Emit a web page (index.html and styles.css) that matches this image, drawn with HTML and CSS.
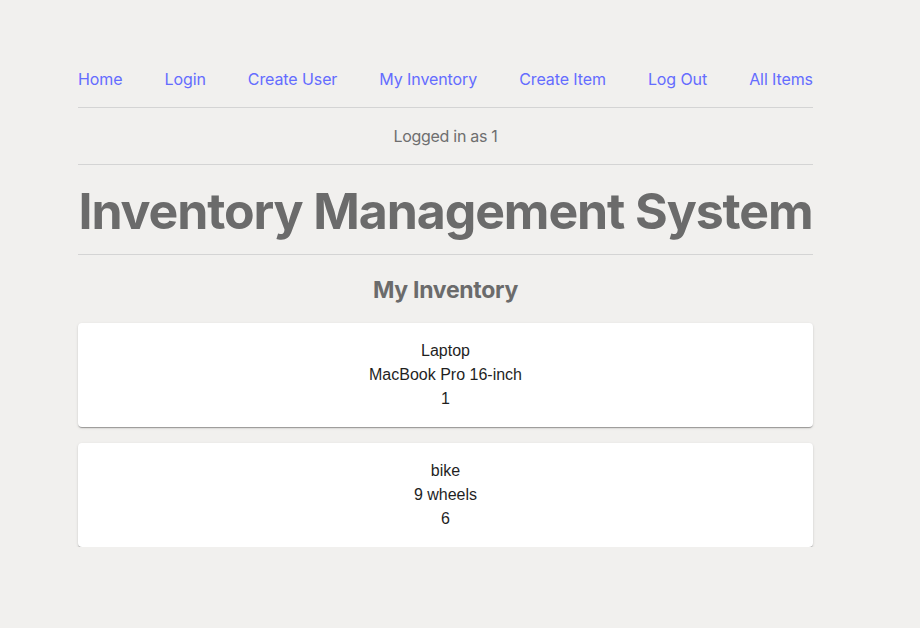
FILE: index.html
```html
<!DOCTYPE html>
<html>
<head>
<meta charset="utf-8">
<link rel="stylesheet" href="styles.css">
</head>
<body>
<div class="page">
  <nav class="nav">
    <a href="#">Home</a>
    <a href="#">Login</a>
    <a href="#">Create User</a>
    <a href="#">My Inventory</a>
    <a href="#">Create Item</a>
    <a href="#">Log Out</a>
    <a href="#">All Items</a>
  </nav>
  <hr class="rule">
  <p class="status">Logged in as 1</p>
  <hr class="rule">
  <h1 class="title">Inventory Management System</h1>
  <hr class="rule">
  <h2 class="subtitle">My Inventory</h2>
  <div class="cards">
    <div class="card">
      <div>Laptop</div>
      <div>MacBook Pro 16-inch</div>
      <div>1</div>
    </div>
    <div class="card">
      <div>bike</div>
      <div>9 wheels</div>
      <div>6</div>
    </div>
  </div>
</div>
</body>
</html>
```
FILE: styles.css
```css
html, body {
  margin: 0;
  padding: 0;
  background: #f1f0ee;
}
body {
  font-family: Inter, "Noto Sans", sans-serif;
  color: #6b6b6b;
}
.page {
  width: 735px;
  margin-left: 78px;
  padding-top: 67px;
}
.nav {
  display: flex;
  justify-content: space-between;
  font-size: 16px;
  line-height: 24px;
  height: 24px;
}
.nav a {
  color: #646cff;
  text-decoration: none;
  font-weight: 400;
  letter-spacing: -0.1px;
}
.rule {
  border: 0;
  border-top: 1px solid #d4d4d4;
  margin: 16px 0 0 0;
  height: 0;
}
.status {
  margin: 16px 0 0 0;
  text-align: center;
  font-size: 16px;
  line-height: 24px;
  letter-spacing: -0.3px;
  color: #6e6e6e;
}
.title {
  margin: 18px 0 0 0;
  font-size: 50px;
  line-height: 56px;
  font-weight: 700;
  color: #6b6b6b;
  text-align: center;
  white-space: nowrap;
  letter-spacing: -1.1px;
}
.title + .rule {
  margin-top: 15px;
}
.subtitle {
  margin: 19px 0 0 0;
  font-size: 23px;
  line-height: 32px;
  font-weight: 700;
  text-align: center;
  letter-spacing: -0.3px;
  color: #6b6b6b;
}
.cards {
  margin-top: 17px;
  display: flex;
  flex-direction: column;
  gap: 16px;
}
.card {
  background: #fff;
  border-radius: 4px;
  box-shadow: 0 2px 1px -1px rgba(0,0,0,0.2), 0 1px 1px 0 rgba(0,0,0,0.14), 0 1px 3px 0 rgba(0,0,0,0.12);
  padding: 16px;
  text-align: center;
  font-family: "Liberation Sans", Arial, sans-serif;
  font-size: 16px;
  line-height: 24px;
  color: #1f1f1f;
}
```
